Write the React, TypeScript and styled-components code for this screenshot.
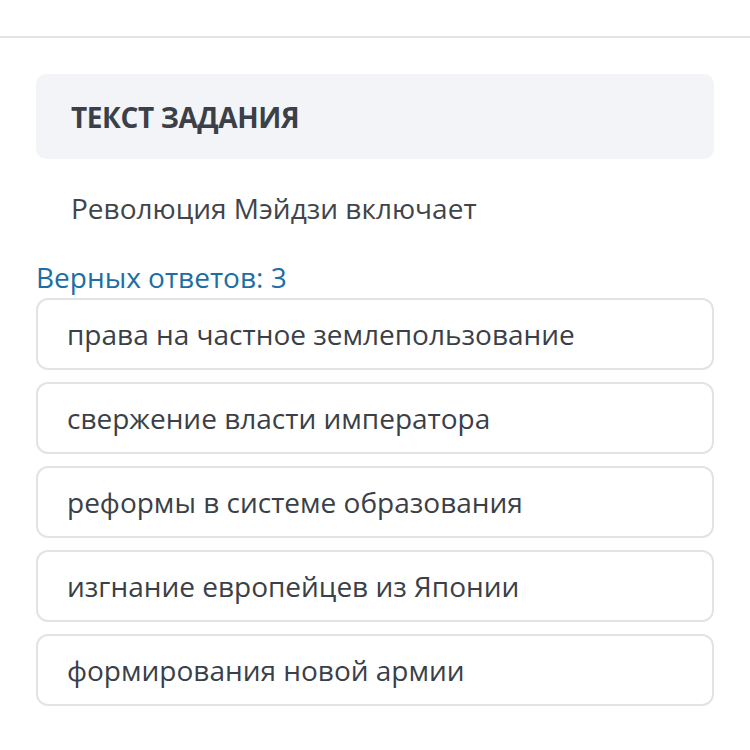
import styled, { createGlobalStyle } from "styled-components";

const GlobalStyle = createGlobalStyle`
    html, body {
        margin: 0;
        padding: 0;
        background: #ffffff;
        font-family: "Open Sans", "Noto Sans", sans-serif;
    }
`;

const Page = styled.div`
    width: 750px;
    height: 750px;
    overflow: hidden;
    background: #fff;
`;

const TopBar = styled.div`
    height: 36px;
    border-bottom: 2px solid #e4e4e6;
`;

const Content = styled.div`
    padding: 36px 36px 0 36px;
    display: flex;
    flex-direction: column;
`;

const TaskHeader = styled.div`
    height: 85px;
    background: #f3f4f8;
    border-radius: 10px;
    display: flex;
    align-items: center;
    padding-left: 35px;
    font-size: 28px;
    font-weight: 700;
    color: #3b3f48;
    letter-spacing: -0.4px;
`;

const Question = styled.p`
    margin: 0;
    padding: 31px 0 0 35px;
    font-size: 28px;
    line-height: 36px;
    color: #41444b;
`;

const CorrectCount = styled.div`
    margin-top: 34px;
    font-size: 28px;
    line-height: 34px;
    color: #1c6ea4;
`;

const Options = styled.div`
    display: flex;
    flex-direction: column;
    gap: 12px;
    margin-top: 4px;
`;

const Option = styled.div`
    height: 68px;
    border: 2px solid #e2e3e5;
    border-radius: 12px;
    display: flex;
    align-items: center;
    padding-left: 29px;
    font-size: 28px;
    color: #3b3f48;
`;

const options = [
    "права на частное землепользование",
    "свержение власти императора",
    "реформы в системе образования",
    "изгнание европейцев из Японии",
    "формирования новой армии",
];

export default function App() {
    return (
        <Page>
            <GlobalStyle />
            <TopBar />
            <Content>
                <TaskHeader>ТЕКСТ ЗАДАНИЯ</TaskHeader>
                <Question>Революция Мэйдзи включает</Question>
                <CorrectCount>Верных ответов: 3</CorrectCount>
                <Options>
                    {options.map((text) => (
                        <Option key={text}>{text}</Option>
                    ))}
                </Options>
            </Content>
        </Page>
    );
}
